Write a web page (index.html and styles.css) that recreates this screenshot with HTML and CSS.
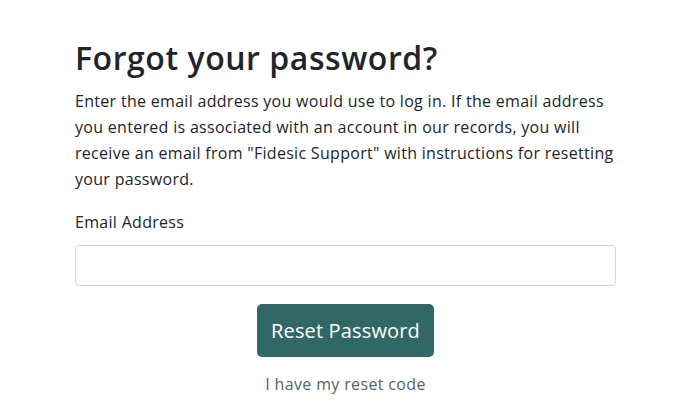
FILE: index.html
```html
<!DOCTYPE html>
<html lang="en">
<head>
<meta charset="utf-8">
<title>Forgot your password?</title>
<link rel="stylesheet" href="styles.css">
</head>
<body>
<main class="page">
  <h1 class="title">Forgot your password?</h1>
  <p class="intro">Enter the email address you would use to log in. If the email address you entered is associated with an account in our records, you will receive an email from "Fidesic Support" with instructions for resetting your password.</p>
  <form class="form">
    <label class="label" for="email">Email Address</label>
    <input class="input" id="email" type="email">
    <div class="actions">
      <button class="btn" type="button">Reset Password</button>
      <a class="link" href="#">I have my reset code</a>
    </div>
  </form>
</main>
</body>
</html>
```
FILE: styles.css
```css
html, body {
  margin: 0;
  padding: 0;
  background: #ffffff;
}
body {
  font-family: "Open Sans", "Noto Sans", sans-serif;
  color: #212529;
  font-size: 16px;
  letter-spacing: 0.3px;
}
.page {
  width: 541px;
  margin-left: 75px;
  padding-top: 39px;
}
.title {
  font-size: 32px;
  font-weight: 600;
  line-height: 1.2;
  letter-spacing: 0.55px;
  margin: 0 0 11px 0;
}
.intro {
  margin: 0 0 18px 0;
  line-height: 26px;
}
.form {
  display: flex;
  flex-direction: column;
}
.label {
  line-height: 24px;
  margin-bottom: 11px;
}
.input {
  height: 41px;
  box-sizing: border-box;
  border: 1px solid #ced4da;
  border-radius: 4px;
  margin: 0;
}
.actions {
  display: flex;
  flex-direction: column;
  align-items: center;
  margin-top: 18px;
  gap: 15px;
}
.btn {
  background: #316866;
  color: #ffffff;
  border: none;
  border-radius: 5px;
  font-family: inherit;
  font-size: 20px;
  letter-spacing: 0.15px;
  height: 53px;
  padding: 0 14px;
}
.link {
  color: #56636a;
  text-decoration: none;
  line-height: 24px;
  letter-spacing: 0.35px;
}
```
